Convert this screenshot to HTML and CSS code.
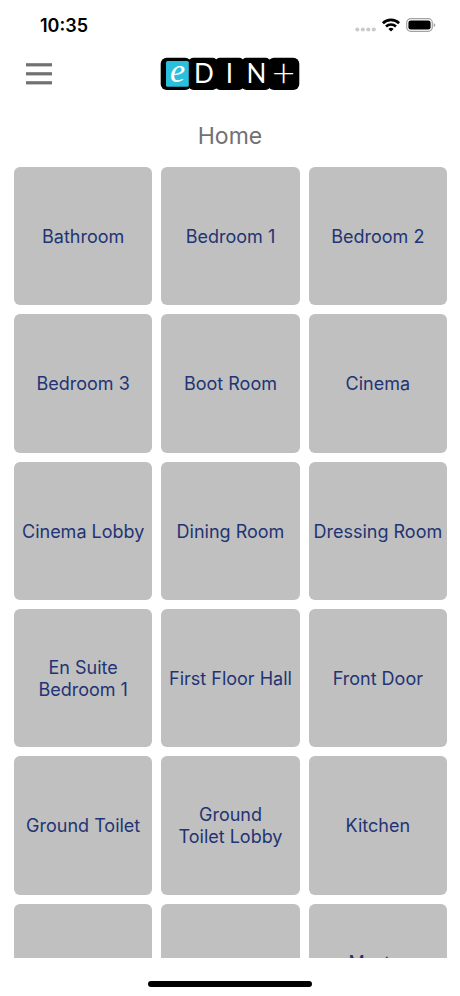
FILE: index.html
```html
<!DOCTYPE html>
<html lang="en">
<head>
    <meta charset="UTF-8">
    <meta name="viewport" content="width=device-width, initial-scale=1.0">
    <title>eDIN+</title>
    <link rel="stylesheet" href="styles.css">
</head>
<body>
    <div class="status-bar">
        <span class="time">10:35</span>
        <div class="status-icons">
            <svg class="signal" width="21" height="5" viewBox="0 0 21 5" fill="#cbcbcb">
                <circle cx="2.3" cy="2.5" r="2.1"/>
                <circle cx="7.8" cy="2.5" r="2.1"/>
                <circle cx="13.3" cy="2.5" r="2.1"/>
                <circle cx="18.8" cy="2.5" r="2.1"/>
            </svg>
            <svg width="18" height="14" viewBox="0 0 18 14">
                <g fill="none" stroke="#000" stroke-width="2.6">
                    <path d="M0.9 5.2A11.6 11.6 0 0 1 17.1 5.2"/>
                    <path d="M4 8.5A7.2 7.2 0 0 1 14 8.5"/>
                </g>
                <path d="M9 13.4L6.4 10.9A3.8 3.8 0 0 1 11.6 10.9Z"/>
            </svg>
            <svg width="30" height="14" viewBox="0 0 30 14">
                <rect x="0.7" y="0.7" width="25.6" height="12.6" rx="4" fill="none" stroke="#a3a3a3" stroke-width="1.2"/>
                <rect x="2.4" y="2.4" width="22.2" height="9.2" rx="2.4"/>
                <path d="M27.7 4.9Q29.4 5.6 29.4 7T27.7 9.1Z" fill="#a3a3a3"/>
            </svg>
        </div>
    </div>

    <header class="header">
        <button class="menu-button" aria-label="Menu">
            <svg width="26" height="22" viewBox="0 0 26 22" fill="#717171">
                <rect y="0.2" width="26" height="3.2"/>
                <rect y="9.2" width="26" height="3.2"/>
                <rect y="18.2" width="26" height="3.2"/>
            </svg>
        </button>
        <svg class="logo" width="140" height="34" viewBox="0 0 140 34">
            <rect x="0.7" y="0.7" width="30.5" height="32.2" rx="6"/>
            <rect x="28.5" y="0.7" width="29" height="32.2" rx="5"/>
            <rect x="55" y="0.7" width="29" height="32.2" rx="5"/>
            <rect x="81.5" y="0.7" width="29" height="32.2" rx="5"/>
            <rect x="108" y="0.7" width="31.3" height="32.2" rx="6"/>
            <rect x="6" y="4" width="22.8" height="25.7" rx="1.5" fill="#2bbfdd"/>
            <text class="logo-e" x="17.5" y="25">e</text>
            <text class="logo-letter" x="44" y="26">D</text>
            <text class="logo-letter" x="69.5" y="26">I</text>
            <text class="logo-letter" x="96.5" y="26">N</text>
            <text class="logo-plus" x="123.5" y="30">+</text>
        </svg>
    </header>

    <h1 class="title">Home</h1>

    <main class="rooms">
        <button class="room">Bathroom</button>
        <button class="room">Bedroom 1</button>
        <button class="room">Bedroom 2</button>
        <button class="room">Bedroom 3</button>
        <button class="room">Boot Room</button>
        <button class="room">Cinema</button>
        <button class="room">Cinema Lobby</button>
        <button class="room">Dining Room</button>
        <button class="room">Dressing Room</button>
        <button class="room">En Suite<br>Bedroom 1</button>
        <button class="room">First Floor Hall</button>
        <button class="room">Front Door</button>
        <button class="room">Ground Toilet</button>
        <button class="room">Ground<br>Toilet Lobby</button>
        <button class="room">Kitchen</button>
        <button class="room">Landing</button>
        <button class="room">Lounge</button>
        <button class="room">Master<br>Bedroom</button>
    </main>

    <footer class="home-area">
        <div class="home-indicator"></div>
    </footer>
</body>
</html>
```

FILE: styles.css
```css
* {
    box-sizing: border-box;
}
body {
    margin: 0;
    height: 100vh;
    display: flex;
    flex-direction: column;
    background-color: #fff;
    font-family: Inter, "Liberation Sans", sans-serif;
}
button {
    border: none;
    padding: 0;
    font-family: inherit;
    cursor: pointer;
}
svg {
    display: block;
    overflow: visible;
}
.status-bar {
    flex: none;
    display: flex;
    justify-content: space-between;
    align-items: center;
    height: 50px;
    padding: 0 24px 0 40px;
}
.time {
    padding-top: 1px;
    font-size: 18px;
    font-weight: 600;
    color: #000;
}
.status-icons {
    display: flex;
    align-items: center;
    gap: 6px;
}
.signal {
    margin-top: 9px;
}
.header {
    flex: none;
    display: grid;
    grid-template-columns: 1fr auto 1fr;
    align-items: center;
    height: 48px;
    padding: 0 26px;
}
.menu-button {
    justify-self: start;
    background: none;
}
.logo-e,
.logo-letter,
.logo-plus {
    fill: #fff;
    text-anchor: middle;
}
.logo-e {
    font-family: "Liberation Serif", serif;
    font-style: italic;
    font-size: 34px;
}
.logo-letter {
    font-family: Lato, sans-serif;
    font-size: 26px;
}
.logo-plus {
    font-family: Lato, sans-serif;
    font-size: 40px;
    font-weight: 300;
}
.title {
    flex: none;
    margin: 0;
    padding: 23px 0 16px;
    font-size: 23px;
    font-weight: 400;
    line-height: 30px;
    text-align: center;
    color: #717171;
}
.rooms {
    flex: 1;
    min-height: 0;
    display: grid;
    grid-template-columns: repeat(3, 1fr);
    align-content: start;
    gap: 9px;
    padding: 0 13px 0 14px;
    overflow-y: auto;
    scrollbar-width: none;
}
.room {
    aspect-ratio: 1;
    min-width: 0;
    padding-top: 2px;
    border-radius: 6px;
    background-color: #c0c0c0;
    color: #1f3474;
    font-size: 18px;
    line-height: 22px;
    text-align: center;
}
.home-area {
    flex: none;
    display: flex;
    justify-content: center;
    align-items: flex-end;
    height: 38px;
    padding-bottom: 9px;
}
.home-indicator {
    width: 164px;
    height: 6px;
    border-radius: 3px;
    background-color: #000;
}
```
